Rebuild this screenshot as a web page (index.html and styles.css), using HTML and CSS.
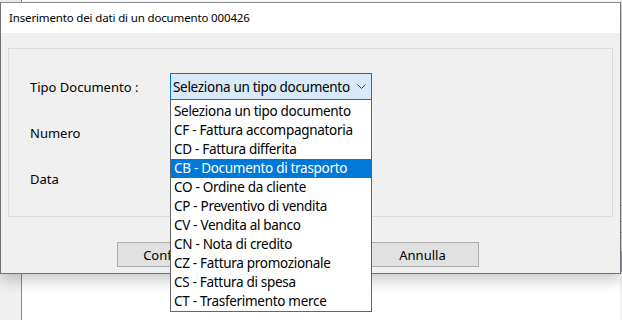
FILE: index.html
```html
<!DOCTYPE html>
<html>
<head>
  <title>Inserimento dei dati di un documento</title>
  <meta charset="UTF-8">
  <link rel="stylesheet" href="styles.css">
</head>
<body>
  <div class="desktop">
    <!-- window behind the dialog -->
    <div class="backdrop">
      <div class="backdrop-side"></div>
      <div class="backdrop-main"></div>
      <div class="backdrop-edge"></div>
    </div>

    <div class="dialog">
      <div class="dialog-title">Inserimento dei dati di un documento 000426</div>
      <div class="dialog-body">
        <div class="group">
          <div class="form-grid">
            <label class="form-label">Tipo Documento :</label>
            <div class="combo">
              <div class="combo-box">
                <span>Seleziona un tipo documento</span>
                <svg class="chevron" width="9" height="5" viewBox="0 0 9 5"><polyline points="0.5,0.5 4.5,4.5 8.5,0.5" fill="none" stroke="#444" stroke-width="1"/></svg>
              </div>
              <ul class="combo-list">
                <li>Seleziona un tipo documento</li>
                <li>CF - Fattura accompagnatoria</li>
                <li>CD - Fattura differita</li>
                <li class="selected">CB - Documento di trasporto</li>
                <li>CO - Ordine da cliente</li>
                <li>CP - Preventivo di vendita</li>
                <li>CV - Vendita al banco</li>
                <li>CN - Nota di credito</li>
                <li>CZ - Fattura promozionale</li>
                <li>CS - Fattura di spesa</li>
                <li>CT - Trasferimento merce</li>
              </ul>
            </div>
            <label class="form-label">Numero</label>
            <div></div>
            <label class="form-label">Data</label>
            <div></div>
          </div>
        </div>
        <div class="buttons">
          <button class="btn">Conferma</button>
          <button class="btn">Annulla</button>
        </div>
      </div>
    </div>
  </div>
</body>
</html>
```

FILE: styles.css
```css
:root {
  --face: #f0f0f0;
  --text: #000;
  --accent: #0078d7;
  --frame: #707070;
  --ui-font: "Noto Sans", "Open Sans", Arial, sans-serif;
}
html, body { margin: 0; padding: 0; }
body { width: 622px; height: 320px; overflow: hidden; background: #fff; font-family: var(--ui-font); color: var(--text); }
.desktop { position: relative; width: 622px; height: 320px; }

/* --- window behind --- */
.backdrop { display: flex; height: 100%; }
.backdrop-side { width: 21px; background: #f0f0f0; border-right: 1px solid #8a8a8a; }
.backdrop-main { flex: 1; background: #fff; }
.backdrop-edge { width: 2px; background: linear-gradient(#e3e3e3 0 205px, #a9a9a9 205px 206px, #e3e3e3 206px 221px, #a9a9a9 221px 222px, #e3e3e3 222px 232px, #a9a9a9 232px 233px, #d8d8d8 233px 251px, #9aa3ad 251px 272px, #f2f2f2 272px); }

/* --- dialog window --- */
.dialog { position: absolute; left: 0; top: 2px; width: 619px; height: 270px; border: 1px solid var(--frame); border-top-color: #8c8c8c; background: var(--face); box-shadow: 0 6px 14px rgba(0, 0, 0, 0.22); display: flex; flex-direction: column; }
.dialog-title { flex-shrink: 0; height: 30px; line-height: 29px; padding-left: 8px; background: #fff; font-size: 11.5px; letter-spacing: -0.15px; }
.dialog-body { flex: 1; padding: 15px 7px 0 7px; }
.group { box-sizing: border-box; border: 1px solid #dcdcdc; height: 169px; padding: 24px 0 0 21px; }
.form-grid { display: grid; grid-template-columns: 140px 202px; grid-auto-rows: 27px; row-gap: 19px; align-items: center; }
.form-label { font-size: 13px; }

/* --- combo box --- */
.combo { position: relative; height: 27px; }
.combo-box { box-sizing: border-box; height: 27px; border: 1px solid var(--accent); background: #d8eaf9; display: flex; align-items: center; justify-content: space-between; padding: 0 4px 0 2px; font-size: 13.5px; letter-spacing: -0.3px; white-space: nowrap; }
.chevron { margin-right: 1px; }
.combo-list { position: absolute; top: 100%; left: 0; right: 0; margin: 0; padding: 2px 0 0 0; list-style: none; background: #fff; border: 1px solid #646464; border-top: none; z-index: 2; }
.combo-list li { height: 19px; line-height: 19px; padding-left: 3px; font-size: 13.5px; letter-spacing: -0.3px; white-space: nowrap; }
.combo-list li.selected { background: var(--accent); color: #fff; }

/* --- buttons --- */
.buttons { display: flex; gap: 136px; padding: 25px 0 0 109px; }
.btn { width: 113px; height: 25px; border: 1px solid #adadad; background: #e1e1e1; font-family: var(--ui-font); font-size: 13px; color: var(--text); padding: 0; }
```
